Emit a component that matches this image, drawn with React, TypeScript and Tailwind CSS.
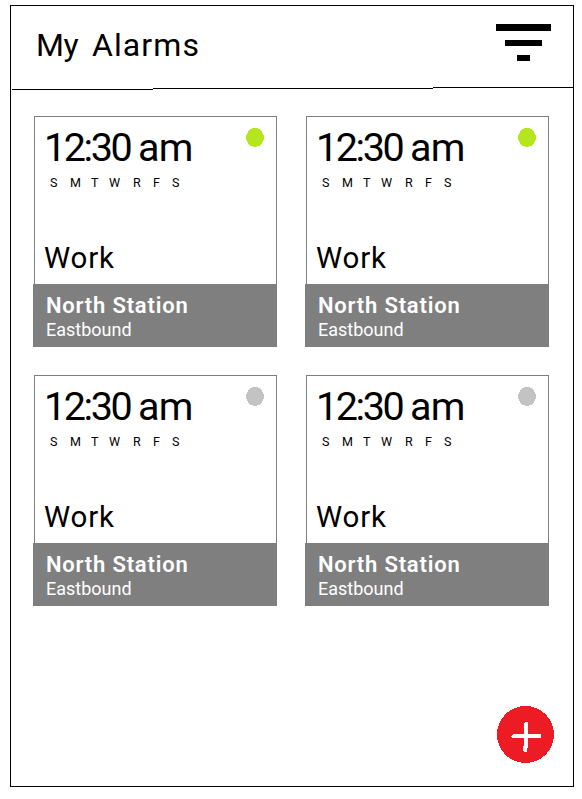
type Alarm = { time: string; name: string; station: string; direction: string; active: boolean };

const alarm = { time: '12:30', name: 'Work', station: 'North Station', direction: 'Eastbound' };

const alarms: Alarm[] = [
  { ...alarm, active: true },
  { ...alarm, active: true },
  { ...alarm, active: false },
  { ...alarm, active: false },
];

const days = [
  { label: 'S', width: 'w-5' },
  { label: 'M', width: 'w-[21px]' },
  { label: 'T', width: 'w-[18px]' },
  { label: 'W', width: 'w-6' },
  { label: 'R', width: 'w-5' },
  { label: 'F', width: 'w-[19px]' },
  { label: 'S', width: 'w-3' },
];

function AlarmCard({ time, name, station, direction, active }: Alarm) {
  return (
    <article className="flex h-[231px] w-[244px] flex-col">
      <div className="ml-px flex h-[168px] flex-col border border-b-0 border-[#7f7f7f] pt-[11px]">
        <div className="flex h-10 justify-between pr-3 pl-[9px]">
          <div className="flex whitespace-nowrap text-[39.5px] leading-10">
            <span className="w-[94px] tracking-[-2.4px]">{time}</span>
            <span className="tracking-[-0.8px]">am</span>
          </div>
          <svg className="h-[19px] w-[18px]" viewBox="0 0 18 19" shapeRendering="crispEdges">
            <ellipse cx="9" cy="9.5" rx="9" ry="9.5" fill={active ? '#b5e61d' : '#c3c3c3'} />
          </svg>
        </div>
        <div className="mt-[7px] flex pl-[15px] text-[12.5px] leading-4">
          {days.map((day, i) => (
            <span key={i} className={day.width}>{day.label}</span>
          ))}
        </div>
        <div className="mt-[51px] pl-[9px] text-[29.5px] leading-8 tracking-[0.8px]">{name}</div>
      </div>
      <footer className="h-[63px] bg-[#7f7f7f] pt-[10px] pl-[13px] text-white">
        <div className="text-[22px] leading-6 font-semibold tracking-[0.8px]">{station}</div>
        <div className="mt-[2px] text-[18px] leading-5">{direction}</div>
      </footer>
    </article>
  );
}

export default function App() {
  return (
    <div className="h-[799px] w-[582px] bg-white pt-[5px] pl-[10px] font-[Roboto,sans-serif] text-black">
      <main className="flex h-[782px] w-[564px] flex-col border border-black">
        <header className="flex h-[81px] items-start justify-between pr-[22px] pl-[25px]">
          <h1 className="flex pt-[19px] text-[32px] leading-10">
            <span className="w-[56px] tracking-[-0.5px]">My</span>
            <span className="tracking-[1.1px]">Alarms</span>
          </h1>
          <div className="flex flex-col items-center pt-[18px]">
            <div className="h-[7px] w-[55px] bg-black" />
            <div className="mt-[9px] h-[6px] w-[37px] bg-black" />
            <div className="mt-[9px] h-[6px] w-[13px] bg-black" />
          </div>
        </header>
        <div className="flex h-[3px] pl-px">
          <div className="mt-[2px] h-px w-[141px] bg-black" />
          <div className="mt-px h-px w-[280px] bg-black" />
          <div className="h-px flex-1 bg-black" />
        </div>
        <section className="mt-[26px] ml-[22px] grid w-[516px] grid-cols-2 gap-7">
          {alarms.map((item, i) => (
            <AlarmCard key={i} {...item} />
          ))}
        </section>
        <button className="mt-auto mr-[19px] mb-[23px] self-end" aria-label="Add alarm">
          <svg className="block" width="57" height="57" viewBox="0 0 57 57" shapeRendering="crispEdges">
            <circle cx="28.5" cy="28.5" r="28.5" fill="#ed1c24" />
            <path d="M28 16h2l1 1v11h13v4H31v9l-1 1v3l-1 1h-2l-1-1v-4l1-2v-7H16l-2-1v-1l2-2h11V17z" fill="white" />
          </svg>
        </button>
      </main>
    </div>
  );
}
